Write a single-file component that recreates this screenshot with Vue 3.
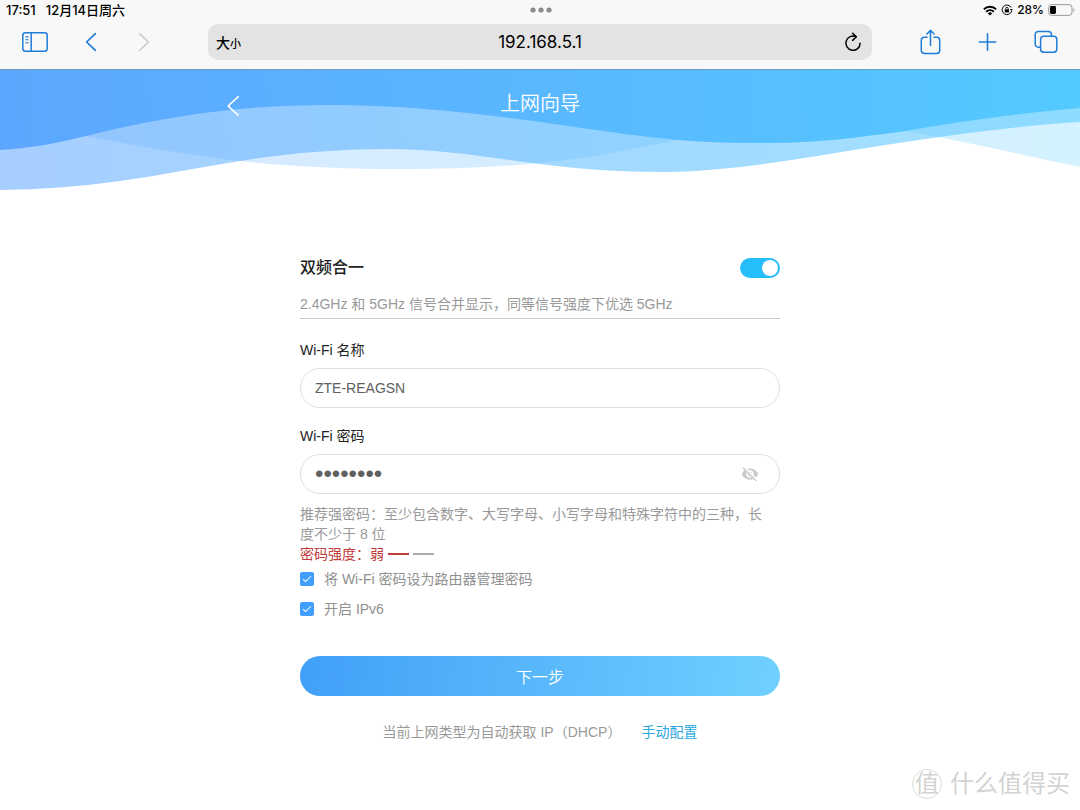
<script setup>
import { ref } from 'vue'

const address = ref('192.168.5.1')
const dualBand = ref(true)
const ssid = ref('ZTE-REAGSN')
const password = ref('a1b2c3d4')
const sameAsAdmin = ref(true)
const ipv6 = ref(true)

// Each wave is a list of [x, y, slope] knots joined by cubic segments.
function curve(knots) {
  let d = `M${knots[0][0]} ${knots[0][1]}`
  for (let i = 1; i < knots.length; i++) {
    const [x0, y0, m0] = knots[i - 1]
    const [x1, y1, m1] = knots[i]
    const h = (x1 - x0) / 3
    d += ` C${x0 + h} ${y0 + m0 * h} ${x1 - h} ${y1 - m1 * h} ${x1} ${y1}`
  }
  return d
}

const front = curve([
  [0, 80, -0.05], [86, 66, -0.25], [240, 39, -0.09], [330, 35, 0], [540, 52, 0.14],
  [678, 70, 0.09], [764, 73, 0], [860, 67, -0.13], [905, 61, -0.17], [1080, 38, -0.08],
]) + ' V0 H0 Z'

const middle = curve([
  [0, 120, -0.01], [120, 111, -0.14], [240, 91, -0.16], [389, 79, 0], [540, 94, 0.13],
  [660, 102, 0], [860, 79, -0.16], [940, 67, -0.14], [1080, 52, -0.06],
]) + ' V0 H0 Z'

const back = curve([
  [0, 50, 0.15], [86, 66, 0.19], [240, 91, 0.11], [403, 99, 0], [540, 93, -0.1],
  [678, 70, -0.2], [800, 50, 0], [905, 61, 0.17], [1080, 97, 0.21],
]) + ' V0 H0 Z'
</script>

<template>
  <div class="screen">
    <div class="chrome">
      <div class="status">
        <div class="status-left"><span>17:51</span><span>12月14日周六</span></div>
        <svg class="dots" width="24" height="6" viewBox="0 0 24 6" fill="#8b8b8b">
          <circle cx="4" cy="3" r="2.6" /><circle cx="12" cy="3" r="2.6" /><circle cx="20" cy="3" r="2.6" />
        </svg>
        <div class="status-right">
          <svg width="14" height="11" viewBox="0 0 14 11" fill="none" stroke="#000" stroke-width="2">
            <path d="M0.9 4.2a8.8 8.8 0 0 1 12.2 0" />
            <path d="M3.2 6.7a5.5 5.5 0 0 1 7.6 0" />
            <path d="M7 10.6 4.9 8.4a3 3 0 0 1 4.2 0Z" fill="#000" stroke="none" />
          </svg>
          <svg width="12" height="12" viewBox="0 0 12 12" fill="none" stroke="#000" stroke-width="1">
            <path d="M10.2 3.6A4.8 4.8 0 1 0 10.6 7" />
            <path d="M8.8 5.1h3L10.6 7Z" fill="#000" stroke="none" />
            <rect x="3.8" y="5.4" width="4.2" height="3" fill="#000" stroke="none" />
            <path d="M4.7 5.6V4.5a1.2 1.2 0 0 1 2.4 0v1.1" stroke-width="0.9" />
          </svg>
          <span>28%</span>
          <svg width="27" height="12" viewBox="0 0 27 12" fill="none">
            <rect x="0.6" y="0.6" width="23.4" height="10.8" rx="3" stroke="#9b9b9b" />
            <rect x="2" y="2" width="6" height="8" rx="1.4" fill="#000" />
            <path d="M25.3 4.2c1.4.5 1.4 3.1 0 3.6Z" fill="#9b9b9b" />
          </svg>
        </div>
      </div>

      <div class="toolbar">
        <div class="tools">
          <button class="tool" aria-label="边栏">
            <svg width="26" height="20" viewBox="0 0 26 20" fill="none" stroke="#1f7cd8" stroke-width="1.5">
              <rect x="0.8" y="0.8" width="24.4" height="18.4" rx="2.6" />
              <path d="M9.2 1v18" /><path d="M3.4 4.9h3.2M3.4 7.8h3.2M3.4 10.7h3.2" stroke-width="1.1" />
            </svg>
          </button>
          <button class="tool" aria-label="后退">
            <svg width="12" height="20" viewBox="0 0 12 20" fill="none" stroke="#1f7cd8" stroke-width="1.7" stroke-linecap="round" stroke-linejoin="round"><path d="M10.4 1.6 1.6 10l8.8 8.4" /></svg>
          </button>
          <button class="tool" aria-label="前进" disabled>
            <svg width="12" height="20" viewBox="0 0 12 20" fill="none" stroke="#cbcbcb" stroke-width="1.5" stroke-linecap="round" stroke-linejoin="round"><path d="M1.6 1.6 10.4 10l-8.8 8.4" /></svg>
          </button>
        </div>

        <div class="address">
          <button class="text-size" aria-label="大小"><span class="big">大</span><span class="small">小</span></button>
          <input v-model="address" class="url" type="text" aria-label="地址">
          <button class="reload" aria-label="重新载入">
            <svg width="18" height="20" viewBox="0 0 18 20" fill="none" stroke="#000" stroke-width="1.5" stroke-linecap="round" stroke-linejoin="round">
              <path d="M12.1 4.8A7.1 7.1 0 1 0 16.1 11.2" /><path d="M8.6 1.2 12.3 4.8 8.7 8.4" />
            </svg>
          </button>
        </div>

        <div class="tools end">
          <button class="tool" aria-label="共享">
            <svg width="22" height="26" viewBox="0 0 22 26" fill="none" stroke="#1f7cd8" stroke-width="1.5" stroke-linecap="round" stroke-linejoin="round">
              <path d="M7 8.3H4.2A2.9 2.9 0 0 0 1.3 11.2v10.4a2.9 2.9 0 0 0 2.9 2.9h12.6a2.9 2.9 0 0 0 2.9-2.9V11.2a2.9 2.9 0 0 0-2.9-2.9H14" />
              <path d="M10.5 16.4V1.5M6.9 5l3.6-3.6L14.1 5" />
            </svg>
          </button>
          <button class="tool" aria-label="新标签页">
            <svg width="20" height="20" viewBox="0 0 20 20" fill="none" stroke="#1f7cd8" stroke-width="1.6" stroke-linecap="round"><path d="M9.5 1.8v16.4M1.3 10h16.4" /></svg>
          </button>
          <button class="tool" aria-label="标签页">
            <svg width="24" height="24" viewBox="0 0 24 24" fill="none" stroke="#1f7cd8" stroke-width="1.5">
              <path d="M6.6 17.2H4.4A3.2 3.2 0 0 1 1.2 14V4.6A3.2 3.2 0 0 1 4.4 1.4h9.8A3.2 3.2 0 0 1 17.4 4.6v1.6" />
              <rect x="6.6" y="6.3" width="16.2" height="16" rx="3.2" />
            </svg>
          </button>
        </div>
      </div>
    </div>

    <header class="hero">
      <svg class="waves" viewBox="0 0 1080 120" preserveAspectRatio="none" aria-hidden="true">
        <defs>
          <linearGradient id="sea" gradientUnits="userSpaceOnUse" x1="0" y1="60" x2="1080" y2="0">
            <stop offset="0" stop-color="#5da6ff" />
            <stop offset="1" stop-color="#54caff" />
          </linearGradient>
        </defs>
        <path :d="back" fill="url(#sea)" opacity="0.25" />
        <path :d="middle" fill="url(#sea)" opacity="0.55" />
        <path :d="front" fill="url(#sea)" />
      </svg>
      <div class="hero-bar">
        <button class="back" aria-label="返回">
          <svg width="14" height="22" viewBox="0 0 14 22" fill="none" stroke="#fff" stroke-width="1.6"><path d="M11.6 1.4 1.2 11l10.4 9.6" /></svg>
        </button>
        <h1>上网向导</h1>
      </div>
    </header>

    <main class="form">
      <div class="row">
        <label class="title" for="dual">双频合一</label>
        <input id="dual" v-model="dualBand" class="switch" type="checkbox" role="switch">
      </div>
      <p class="desc">2.4GHz 和 5GHz 信号合并显示，同等信号强度下优选 5GHz</p>

      <label class="label first" for="ssid">Wi-Fi 名称</label>
      <input id="ssid" v-model="ssid" class="field" type="text">

      <label class="label" for="pwd">Wi-Fi 密码</label>
      <div class="secret">
        <input id="pwd" v-model="password" class="field dotted" type="password">
        <button class="eye" aria-label="显示密码">
          <svg width="18" height="18" viewBox="0 0 24 24" fill="#cbcbcb">
            <path d="M12 7c2.76 0 5 2.24 5 5 0 .65-.13 1.26-.36 1.83l2.92 2.92c1.51-1.26 2.7-2.89 3.43-4.75-1.73-4.39-6-7.5-11-7.5-1.4 0-2.74.25-3.98.7l2.16 2.16C10.74 7.13 11.35 7 12 7zM2 4.27l2.28 2.28.46.46C3.08 8.3 1.78 10.02 1 12c1.73 4.39 6 7.5 11 7.5 1.55 0 3.03-.3 4.38-.84l.42.42L19.73 22 21 20.73 3.27 3 2 4.27zM7.53 9.8l1.55 1.55c-.05.21-.08.43-.08.65 0 1.66 1.34 3 3 3 .22 0 .44-.03.65-.08l1.55 1.55c-.67.33-1.41.53-2.2.53-2.76 0-5-2.24-5-5 0-.79.2-1.53.53-2.2zm4.31-.78l3.15 3.15.02-.16c0-1.66-1.34-3-3-3l-.17.01z" />
          </svg>
        </button>
      </div>

      <p class="hint">推荐强密码：至少包含数字、大写字母、小写字母和特殊字符中的三种，长<br>度不少于 8 位</p>
      <div class="strength"><span>密码强度：弱</span><i class="bar on"></i><i class="bar"></i></div>

      <label class="check"><input v-model="sameAsAdmin" type="checkbox"><span>将 Wi-Fi 密码设为路由器管理密码</span></label>
      <label class="check"><input v-model="ipv6" type="checkbox"><span>开启 IPv6</span></label>

      <button class="next">下一步</button>
      <p class="foot"><span>当前上网类型为自动获取 IP（DHCP）</span><a href="#manual">手动配置</a></p>
    </main>

    <div class="mark"><span class="seal">值</span><span>什么值得买</span></div>
  </div>
</template>

<style>
body {
  background: #fff;
}
</style>

<style scoped>
.screen {
  position: relative;
  min-height: 100vh;
  box-sizing: border-box;
  background: #fff;
  font-family: "Liberation Sans", "Noto Sans CJK SC", sans-serif;
  font-size: 14px;
  line-height: 20px;
  color: #222;
}
button {
  padding: 0;
  border: 0;
  background: none;
  font-family: inherit;
  color: inherit;
  cursor: pointer;
}
svg {
  display: block;
}
p,
h1 {
  margin: 0;
}
.chrome {
  background: #f8f8f8;
  border-bottom: 1px solid #6d9cc6;
  font-family: Inter, "Noto Sans CJK SC", sans-serif;
}
.status {
  display: grid;
  grid-template-columns: 1fr auto 1fr;
  align-items: center;
  height: 20px;
  padding: 0 5px 0 6px;
  font-size: 12px;
  font-weight: 500;
  color: #000;
}
.status-left {
  display: flex;
  gap: 10px;
  font-size: 13px;
}
.status-right {
  display: flex;
  align-items: center;
  justify-content: flex-end;
  gap: 4px;
}
.toolbar {
  display: grid;
  grid-template-columns: 208px 1fr 208px;
  padding: 4px 0 9px;
}
.tools {
  display: flex;
  align-items: center;
  gap: 33px;
  height: 36px;
  padding: 0 22px;
}
.tools.end {
  justify-content: flex-end;
  gap: 36px;
}
.tool {
  display: flex;
  align-items: center;
  justify-content: center;
  min-width: 20px;
}
.address {
  display: flex;
  align-items: center;
  height: 36px;
  padding: 0 10px 0 8px;
  border-radius: 10px;
  background: #e3e3e3;
}
.text-size {
  width: 30px;
  font-weight: 500;
  text-align: left;
  white-space: nowrap;
  color: #000;
}
.big {
  font-size: 14px;
}
.small {
  font-size: 11px;
}
.reload {
  display: flex;
  justify-content: flex-end;
  width: 28px;
}
.url {
  flex: 1;
  min-width: 0;
  padding: 0;
  border: 0;
  outline: 0;
  background: none;
  font-family: inherit;
  font-size: 17px;
  text-align: center;
  color: #000;
}
.hero {
  position: relative;
  height: 120px;
}
.waves {
  position: absolute;
  inset: 0;
  width: 100%;
  height: 120px;
}
.hero-bar {
  position: relative;
  display: grid;
  grid-template-columns: 1fr auto 1fr;
  align-items: center;
  width: 58%;
  margin: 0 auto;
  padding-top: 19px;
}
.back {
  justify-self: start;
  padding-top: 4px;
}
h1 {
  grid-column: 2;
  font-size: 20px;
  font-weight: 350;
  line-height: 30px;
  color: #fff;
}
.form {
  display: flex;
  flex-direction: column;
  max-width: 480px;
  margin: 0 auto;
  padding: 64px 0;
}
.row {
  display: flex;
  align-items: center;
  justify-content: space-between;
  height: 28px;
}
.title {
  font-size: 16px;
  font-weight: 500;
}
.switch {
  appearance: none;
  display: flex;
  width: 40px;
  height: 20px;
  margin: 0;
  padding: 2px;
  box-sizing: border-box;
  border-radius: 10px;
  background: #ccc;
}
.switch::after {
  content: "";
  width: 16px;
  height: 16px;
  border-radius: 50%;
  background: #fff;
}
.switch:checked {
  justify-content: flex-end;
  background: #26bdfb;
}
.desc {
  margin-top: 12px;
  padding-bottom: 4px;
  border-bottom: 1px solid #c9c9c9;
  color: #999;
}
.label {
  margin: 18px 0 8px;
}
.label.first {
  margin-top: 21px;
}
.field {
  width: 100%;
  height: 40px;
  box-sizing: border-box;
  padding: 0 14px;
  border: 1px solid #dfdfdf;
  border-radius: 20px;
  outline: 0;
  background: #fff;
  font-family: inherit;
  font-size: 14px;
  color: #606060;
}
.secret {
  position: relative;
  display: flex;
}
.dotted {
  padding-right: 44px;
  font-size: 24px;
}
.eye {
  position: absolute;
  right: 21px;
  top: 11px;
}
.hint {
  margin-top: 10px;
  color: #999;
}
.strength {
  display: flex;
  align-items: center;
  gap: 4px;
  color: #c23b3b;
}
.bar {
  width: 21px;
  height: 2px;
  background: #aaa;
}
.bar.on {
  background: #c23b3b;
}
.check {
  display: flex;
  align-items: center;
  gap: 10px;
  height: 30px;
  color: #909090;
}
.check input {
  appearance: none;
  display: flex;
  justify-content: center;
  width: 14px;
  height: 14px;
  margin: 0;
  border-radius: 2px;
  background: #ddd;
}
.check input:checked {
  background: #409eff;
}
.check input:checked::after {
  content: "";
  width: 3px;
  height: 7px;
  margin-top: 2px;
  border: solid #fff;
  border-width: 0 1px 1px 0;
  transform: rotate(45deg);
}
.next {
  height: 40px;
  margin-top: 32px;
  border-radius: 20px;
  background: linear-gradient(100deg, #409ff8, #70d1ff);
  font-size: 16px;
  font-weight: 350;
  color: #fff;
}
.foot {
  display: flex;
  justify-content: center;
  gap: 20px;
  margin-top: 26px;
  color: #999;
}
.foot a {
  color: #2ba8dc;
  text-decoration: none;
}
.mark {
  position: absolute;
  right: 10px;
  bottom: 10px;
  display: flex;
  align-items: center;
  gap: 8px;
  font-size: 24px;
  line-height: 32px;
  color: #d3d3d3;
}
.seal {
  width: 28px;
  height: 28px;
  border: 1px solid #dcdcdc;
  border-radius: 50%;
  line-height: 28px;
  text-align: center;
}
</style>
